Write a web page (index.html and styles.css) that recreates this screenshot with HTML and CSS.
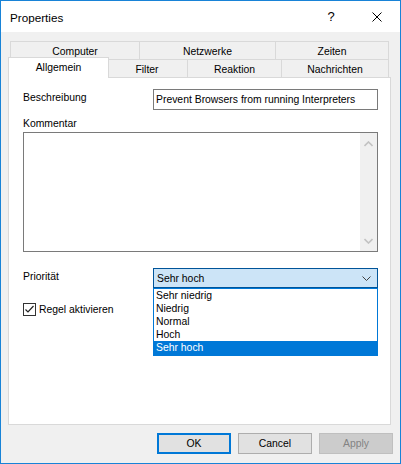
FILE: index.html
```html
<!DOCTYPE html>
<html>
<head>
<meta charset="utf-8">
<link rel="stylesheet" href="styles.css">
</head>
<body>
<div class="window">
  <div class="titlebar">
    <div class="title">Properties</div>
    <div class="tbtn help">?</div>
    <div class="tbtn close">
      <svg width="10" height="10" viewBox="0 0 10 10"><path d="M0.5 0.5 L9.5 9.5 M9.5 0.5 L0.5 9.5" stroke="#000" stroke-width="1" fill="none"/></svg>
    </div>
  </div>
  <div class="content">
    <div class="tabs">
      <div class="tabrow back">
        <div class="tab w-computer">Computer</div>
        <div class="tab w-netz">Netzwerke</div>
        <div class="tab w-zeiten">Zeiten</div>
      </div>
      <div class="tabrow front">
        <div class="tab w-allg selected">Allgemein</div>
        <div class="tab w-filter">Filter</div>
        <div class="tab w-reak">Reaktion</div>
        <div class="tab w-nach">Nachrichten</div>
      </div>
    </div>
    <div class="panel">
      <div class="row">
        <div class="label">Beschreibung</div>
        <div class="textbox">Prevent Browsers from running Interpreters</div>
      </div>
      <div class="label kommentar">Kommentar</div>
      <div class="textarea">
        <div class="scrollbar">
          <svg width="9" height="6" viewBox="0 0 9 6"><path d="M0.5 5 L4.5 1 L8.5 5" stroke="#c2c2c2" stroke-width="1.6" fill="none"/></svg>
          <svg width="9" height="6" viewBox="0 0 9 6"><path d="M0.5 1 L4.5 5 L8.5 1" stroke="#c2c2c2" stroke-width="1.6" fill="none"/></svg>
        </div>
      </div>
      <div class="row prio">
        <div class="label">Priorität</div>
        <div class="combo-wrap">
          <div class="combo">
            <span>Sehr hoch</span>
            <svg width="9" height="5" viewBox="0 0 9 5"><path d="M0.5 0.5 L4.5 4.5 L8.5 0.5" stroke="#404040" stroke-width="1" fill="none"/></svg>
          </div>
          <div class="dropdown">
            <div class="item">Sehr niedrig</div>
            <div class="item">Niedrig</div>
            <div class="item">Normal</div>
            <div class="item">Hoch</div>
            <div class="item active">Sehr hoch</div>
          </div>
        </div>
      </div>
      <div class="check-row">
        <div class="checkbox">
          <svg width="11" height="11" viewBox="0 0 11 11"><path d="M1.5 5.5 L4 8 L9.5 2" stroke="#222" stroke-width="1.2" fill="none"/></svg>
        </div>
        <span>Regel aktivieren</span>
      </div>
    </div>
    <div class="buttons">
      <div class="btn default">OK</div>
      <div class="btn">Cancel</div>
      <div class="btn disabled">Apply</div>
    </div>
  </div>
</div>
</body>
</html>
```
FILE: styles.css
```css
html, body {
  margin: 0;
  padding: 0;
}
body {
  font-family: "Liberation Sans", Arial, sans-serif;
  font-size: 10.4px;
  line-height: 13px;
  color: #000;
  background: #fff;
}
.window {
  width: 401px;
  height: 464px;
  box-sizing: border-box;
  border: 1px solid #1883d7;
  display: flex;
  flex-direction: column;
  background: #f0f0f0;
}
.titlebar {
  height: 31px;
  background: #fff;
  display: flex;
  align-items: center;
  padding-left: 9px;
  flex-shrink: 0;
}
.title {
  flex: 1;
  font-size: 11.7px;
  padding-top: 1px;
}
.tbtn {
  width: 46px;
  height: 31px;
  display: flex;
  align-items: center;
  justify-content: center;
}
.help {
  font-size: 13px;
  padding-bottom: 1px;
}
.content {
  flex: 1;
  display: flex;
  flex-direction: column;
  padding: 9px 9px 0 7px;
}
.tabs {
  display: flex;
  flex-direction: column;
  padding: 0 2px;
}
.tabrow {
  display: flex;
  height: 18px;
}
.tab {
  box-sizing: border-box;
  border: 1px solid #d9d9d9;
  border-bottom: none;
  background: #f0f0f0;
  display: flex;
  align-items: center;
  justify-content: center;
  margin-left: -1px;
  flex-shrink: 0;
}
.tab:first-child {
  margin-left: 0;
}
.back .tab {
  height: 19px;
  padding-top: 1px;
}
.front .tab {
  height: 18px;
  padding-top: 2px;
}
.w-computer { width: 130px; }
.w-netz { width: 137px; }
.w-zeiten { width: 114px; }
.w-allg { width: 97px; }
.w-filter { width: 82px; }
.w-reak { width: 95px; }
.w-nach { width: 108px; }
.tab.selected {
  position: relative;
  z-index: 2;
  background: #fff;
  width: 101px;
  height: 21px;
  margin: -2px -2px 0 -2px;
  padding-top: 0;
  padding-bottom: 1px;
}
.tab.selected + .tab {
  margin-left: -1px;
}
.panel {
  box-sizing: border-box;
  height: 348px;
  background: #fff;
  border: 1px solid #d9d9d9;
  padding: 11px 12px 0 14px;
  display: flex;
  flex-direction: column;
}
.row {
  display: flex;
  align-items: flex-start;
}
.row .label {
  width: 130px;
  flex-shrink: 0;
  padding-top: 2px;
}
.textbox {
  box-sizing: border-box;
  width: 225px;
  height: 21px;
  border: 1px solid #7a7a7a;
  padding: 3px 2px 0 2px;
  white-space: nowrap;
}
.kommentar {
  margin-top: 7px;
}
.textarea {
  box-sizing: border-box;
  margin-top: 2px;
  width: 355px;
  height: 120px;
  border: 1px solid #7a7a7a;
  display: flex;
  justify-content: flex-end;
}
.scrollbar {
  width: 17px;
  background: #f0f0f0;
  display: flex;
  flex-direction: column;
  justify-content: space-between;
  align-items: center;
  padding: 8px 0 7px;
}
.prio {
  margin-top: 16px;
}
.combo-wrap {
  position: relative;
}
.combo {
  box-sizing: border-box;
  width: 225px;
  height: 20px;
  background: #cce4f7;
  border: 1px solid #005499;
  display: flex;
  align-items: center;
  justify-content: space-between;
  padding: 1px 6px 0 3px;
}
.dropdown {
  position: absolute;
  top: 20px;
  left: 0;
  width: 225px;
  box-sizing: border-box;
  background: #fff;
  border: 1px solid #0078d7;
  z-index: 5;
}
.item {
  height: 13px;
  line-height: 13px;
  padding-left: 2px;
}
.item.active {
  background: #0078d7;
  color: #fff;
  height: 14px;
}
.check-row {
  display: flex;
  align-items: center;
  margin-top: 15px;
  gap: 3px;
}
.checkbox {
  box-sizing: border-box;
  width: 13px;
  height: 13px;
  border: 1px solid #333;
  background: #fff;
  display: flex;
  align-items: center;
  justify-content: center;
}
.buttons {
  display: flex;
  justify-content: flex-end;
  gap: 7px;
  margin: 8px -2px 0 0;
}
.btn {
  box-sizing: border-box;
  width: 74px;
  height: 21px;
  background: #e1e1e1;
  border: 1px solid #adadad;
  display: flex;
  align-items: center;
  justify-content: center;
}
.btn.default {
  border: 2px solid #0078d7;
}
.btn.disabled {
  background: #cccccc;
  border-color: #bfbfbf;
  color: #838383;
}
```
